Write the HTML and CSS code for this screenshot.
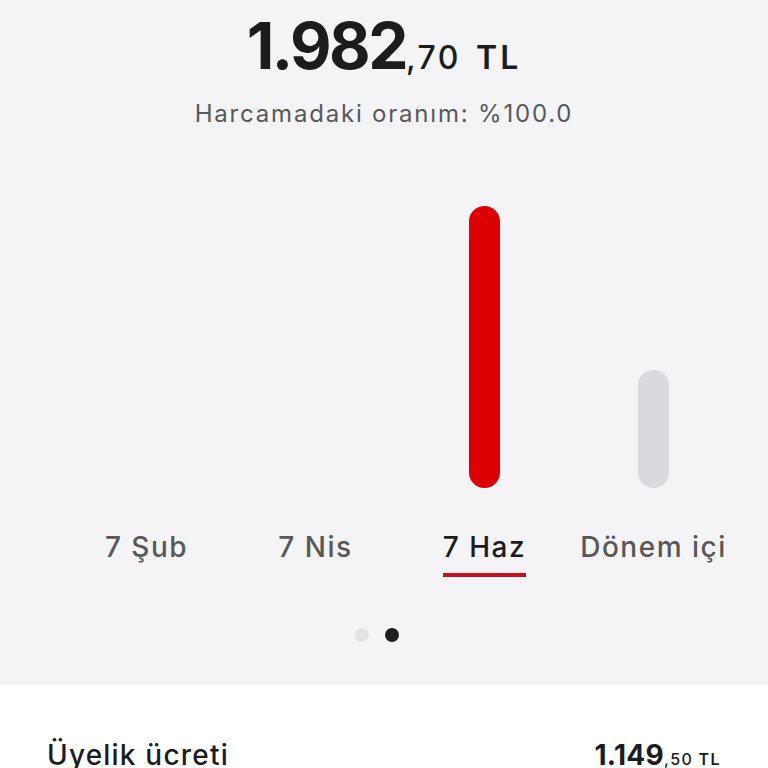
FILE: index.html
```html
<!DOCTYPE html>
<html lang="tr">
<head>
  <meta charset="UTF-8" />
  <meta name="viewport" content="width=device-width, initial-scale=1" />
  <title>Harcama Özeti</title>
  <link rel="stylesheet" href="styles.css">
</head>
<body>

  <header class="summary">
    <div class="amount">1.982<span class="cents">,70</span><span class="currency">TL</span></div>
    <p class="ratio">Harcamadaki oranım: %100.0</p>
  </header>

  <section class="chart">
    <div class="col"></div>
    <div class="col"></div>
    <div class="col"><div class="bar active" style="height: 282px"></div></div>
    <div class="col"><div class="bar" style="height: 118px"></div></div>
  </section>

  <nav class="periods">
    <div class="col"><span class="label">7 Şub</span></div>
    <div class="col"><span class="label">7 Nis</span></div>
    <div class="col"><span class="label selected">7 Haz</span></div>
    <div class="col"><span class="label">Dönem içi</span></div>
  </nav>

  <div class="dots">
    <span class="dot"></span>
    <span class="dot current"></span>
  </div>

  <main class="details">
    <div class="row">
      <span class="name">Üyelik ücreti</span>
      <span class="price">1.149<span class="cents">,50</span><span class="currency">TL</span></span>
    </div>
  </main>

</body>
</html>
```

FILE: styles.css
```css
body {
  margin: 0;
  font-family: Inter, "Noto Sans", sans-serif;
  background: #f4f4f6;
  color: #1c1c1e;
  overflow: hidden;
}

.summary {
  text-align: center;
  padding-top: 14px;
}

.amount {
  font-size: 64px;
  font-weight: 700;
  line-height: 1;
  letter-spacing: -2.5px;
}

.amount .cents {
  font-size: 32px;
  font-weight: 500;
  letter-spacing: 2.5px;
}

.amount .currency {
  font-size: 32px;
  font-weight: 600;
  letter-spacing: 3px;
  margin-left: 15px;
}

.ratio {
  margin: 24px 0 0;
  font-size: 24px;
  line-height: 1;
  letter-spacing: 1.8px;
  color: #58585a;
}

.chart,
.periods {
  display: flex;
  padding-left: 62px;
}

.col {
  width: 169px;
  display: flex;
  justify-content: center;
}

.chart {
  height: 362px;
  align-items: flex-end;
}

.bar {
  width: 31px;
  border-radius: 16px;
  background: #d9d9de;
}

.bar.active {
  background: #dc0005;
}

.periods {
  margin-top: 45px;
}

.label {
  display: inline-block;
  font-size: 28px;
  font-weight: 500;
  line-height: 1;
  letter-spacing: 1.5px;
  color: #58585a;
  padding-bottom: 12px;
  border-bottom: 4px solid transparent;
  white-space: nowrap;
}

.label.selected {
  color: #1c1c1e;
  border-bottom-color: #c8101e;
}

.dots {
  display: flex;
  justify-content: center;
  gap: 16px;
  margin-top: 51px;
  padding-right: 14px;
}

.dot {
  width: 14px;
  height: 14px;
  border-radius: 50%;
  background: #e4e4e7;
}

.dot.current {
  background: #1e1e20;
}

.details {
  margin-top: 43px;
  background: #fff;
  padding: 56px 47px 40px;
}

.row {
  display: flex;
  justify-content: space-between;
  align-items: baseline;
}

.name {
  font-size: 28px;
  font-weight: 500;
  line-height: 1;
  letter-spacing: 1.2px;
}

.price {
  font-size: 28px;
  font-weight: 700;
  line-height: 1;
  letter-spacing: 0.3px;
}

.price .cents {
  font-size: 16px;
  font-weight: 500;
  letter-spacing: 1.5px;
}

.price .currency {
  font-size: 16px;
  font-weight: 600;
  letter-spacing: 1.5px;
  margin-left: 5px;
}
```
